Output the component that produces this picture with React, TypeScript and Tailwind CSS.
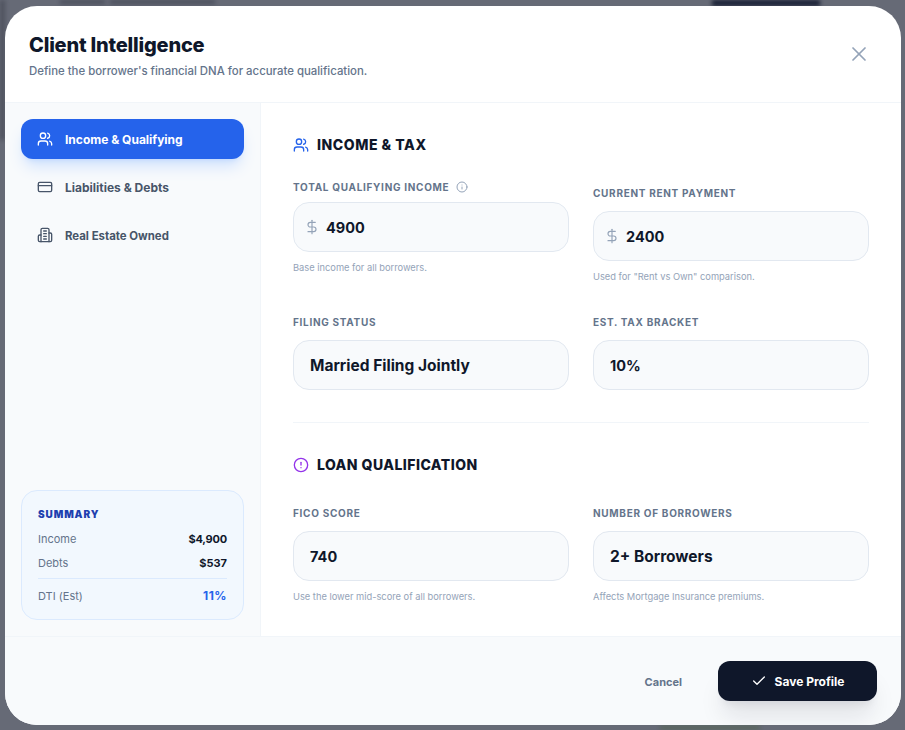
import { Check, CreditCard, AlertCircle, Info, Users, X, DollarSign } from "lucide-react";
import type { ReactNode } from "react";

const font = "font-['Inter','Liberation_Sans',sans-serif]";

// older lucide building-2, the package's current one has a different shape
function Building({ className }: { className?: string }) {
  return (
    <svg className={className} viewBox="0 0 24 24" fill="none" stroke="currentColor" strokeWidth="2" strokeLinecap="round" strokeLinejoin="round">
      <path d="M6 22V4a2 2 0 0 1 2-2h8a2 2 0 0 1 2 2v18Z" />
      <path d="M6 12H4a2 2 0 0 0-2 2v6a2 2 0 0 0 2 2h2" />
      <path d="M18 9h2a2 2 0 0 1 2 2v9a2 2 0 0 1-2 2h-2" />
      <path d="M10 6h4" />
      <path d="M10 10h4" />
      <path d="M10 14h4" />
      <path d="M10 18h4" />
    </svg>
  );
}

function Field({ label, value, hint, dollar, info, shift, numeric }: { label: string; value: string; hint?: string; dollar?: boolean; info?: boolean; shift?: boolean; numeric?: boolean }) {
  return (
    <div className={`flex flex-col ${shift ? "mt-1.5" : ""}`}>
      <div className="flex h-[15px] items-center gap-[7px] text-[10px] leading-[15px] font-bold tracking-[0.7px] text-[#64748b] uppercase">
        {label}
        {info && <Info className="h-3 w-3 text-[#94a3b8]" />}
      </div>
      <div className={`flex h-[50px] items-center rounded-2xl border border-[#e2e8f0] bg-[#f8fafc] px-4 ${info ? "mt-[7px]" : "mt-[10px]"}`}>
        {dollar && <DollarSign className="mr-[6px] -ml-[6px] h-4 w-4 text-[#94a3b8]" strokeWidth={1.75} />}
        <span className={`pt-0.5 font-bold text-[#0f172a] ${numeric ? "text-[14.5px]" : "text-[15.5px]"}`}>{value}</span>
      </div>
      {hint && <p className={`text-[9.3px] leading-[15px] text-[#94a3b8] ${info ? "mt-[8px]" : "mt-2"}`}>{hint}</p>}
    </div>
  );
}

function NavItem({ icon, label, active, labelClass }: { icon: ReactNode; label: string; active?: boolean; labelClass?: string }) {
  return (
    <div className={`flex h-10 items-center gap-3 rounded-xl px-4 text-xs font-bold ${active ? "bg-[#2563eb] text-white shadow-lg shadow-blue-500/20" : "text-[#475569]"}`}>
      {icon}
      <span className={labelClass ?? "pt-0.5"}>{label}</span>
    </div>
  );
}

function SummaryRow({ label, value, valueClass }: { label: string; value: string; valueClass: string }) {
  return (
    <div className="flex h-4 items-center justify-between pt-0.5 text-[11px]">
      <span className="text-[#64748b]">{label}</span>
      <span className={`font-bold ${valueClass}`}>{value}</span>
    </div>
  );
}

export default function App() {
  return (
    <div className={`relative flex h-[730px] w-[905px] overflow-hidden bg-[#666a76] pt-1.5 pl-[5px] ${font}`}>
      {/* blurred page behind the modal */}
      <div className="absolute top-0 left-[60px] h-[4px] w-[45px] bg-[#4a4e5c] blur-[2px]" />
      <div className="absolute top-0 left-[110px] h-[4px] w-[105px] bg-[#4a4e5c] blur-[2px]" />
      <div className="absolute top-0 left-[712px] h-1.5 w-[108px] bg-[#161d33] blur-[2px]" />
      <div className="absolute top-0 left-0 h-[140px] w-[5px] bg-[#4e525e] blur-[2px]" />
      <div className="absolute bottom-0 left-[660px] h-[5px] w-[100px] bg-[#59665f] blur-[2px]" />

      <div className="relative flex h-[719px] w-[896px] flex-col overflow-hidden rounded-[32px] bg-white">
        <header className="flex h-[97px] shrink-0 items-start justify-between border-b border-[#f1f5f9] px-6 pt-6">
          <div>
            <h1 className="text-xl leading-[30px] font-extrabold tracking-[-0.2px] text-[#0f172a]">Client Intelligence</h1>
            <p className="mt-[3px] text-[11.4px] leading-4 font-medium text-[#64748b]">Define the borrower's financial DNA for accurate qualification.</p>
          </div>
          <X className="mt-3 mr-1.5 h-6 w-6 text-[#94a3b8]" strokeWidth={1.75} />
        </header>

        <div className="flex min-h-0 flex-1">
          <aside className="flex w-[256px] shrink-0 flex-col justify-between border-r border-[#f1f5f9] bg-[#f8fafc] p-4">
            <nav className="flex flex-col gap-2">
              <NavItem active icon={<Users className="h-4 w-4" />} label="Income & Qualifying" />
              <NavItem icon={<CreditCard className="h-4 w-4" />} label="Liabilities & Debts" />
              <NavItem icon={<Building className="h-4 w-4" />} label="Real Estate Owned" labelClass="pt-1 text-[11.4px]" />
            </nav>
            <div className="rounded-2xl border border-[#dbeafe] bg-[#eff6ff]/60 p-4">
              <div className="text-[10px] leading-[15px] font-black tracking-[0.9px] text-[#1e40af] uppercase">Summary</div>
              <div className="mt-2 flex flex-col gap-2">
                <SummaryRow label="Income" value="$4,900" valueClass="tracking-[-0.2px] text-[#0f172a]" />
                <SummaryRow label="Debts" value="$537" valueClass="text-[#0f172a]" />
              </div>
              <div className="mt-2 border-t border-[#dbeafe] pt-2">
                <SummaryRow label="DTI (Est)" value="11%" valueClass="text-xs tracking-[0.5px] text-[#2563eb]" />
              </div>
            </div>
          </aside>

          <main className="flex-1 px-8 pt-8">
            <h2 className="flex h-5 items-center gap-2 text-sm font-extrabold tracking-[0.55px] text-[#0f172a] uppercase">
              <Users className="h-4 w-4 text-[#2563eb]" />
              Income &amp; Tax
            </h2>
            <div className="mt-[24.5px] grid grid-cols-2 items-start gap-x-6 gap-y-[31px]">
              <Field label="Total Qualifying Income" value="4900" hint="Base income for all borrowers." dollar info numeric />
              <Field label="Current Rent Payment" value="2400" hint={'Used for "Rent vs Own" comparison.'} dollar shift numeric />
              <Field label="Filing Status" value="Married Filing Jointly" />
              <Field label="Est. Tax Bracket" value="10%" numeric />
            </div>
            <div className="mt-8 border-t border-[#f1f5f9] pt-8">
              <h2 className="flex h-5 items-center gap-2 text-sm font-extrabold tracking-[0.45px] text-[#0f172a] uppercase">
                <AlertCircle className="h-4 w-4 text-[#9333ea]" />
                Loan Qualification
              </h2>
              <div className="mt-[31px] grid grid-cols-2 gap-x-6">
                <Field label="FICO Score" value="740" hint="Use the lower mid-score of all borrowers." numeric />
                <Field label="Number of Borrowers" value="2+ Borrowers" hint="Affects Mortgage Insurance premiums." />
              </div>
            </div>
          </main>
        </div>

        <footer className="flex h-[89px] shrink-0 items-center justify-end gap-9 border-t border-[#f1f5f9] bg-[#f8fafc] pr-6">
          <span className="pt-0.5 text-[11px] font-bold text-[#64748b]">Cancel</span>
          <div className="flex h-10 w-[159px] items-center justify-center gap-2 rounded-xl bg-[#0f172a] text-xs font-bold text-white shadow-xl shadow-slate-900/10">
            <Check className="h-4 w-4" />
            <span className="pt-0.5">Save Profile</span>
          </div>
        </footer>
      </div>
    </div>
  );
}
